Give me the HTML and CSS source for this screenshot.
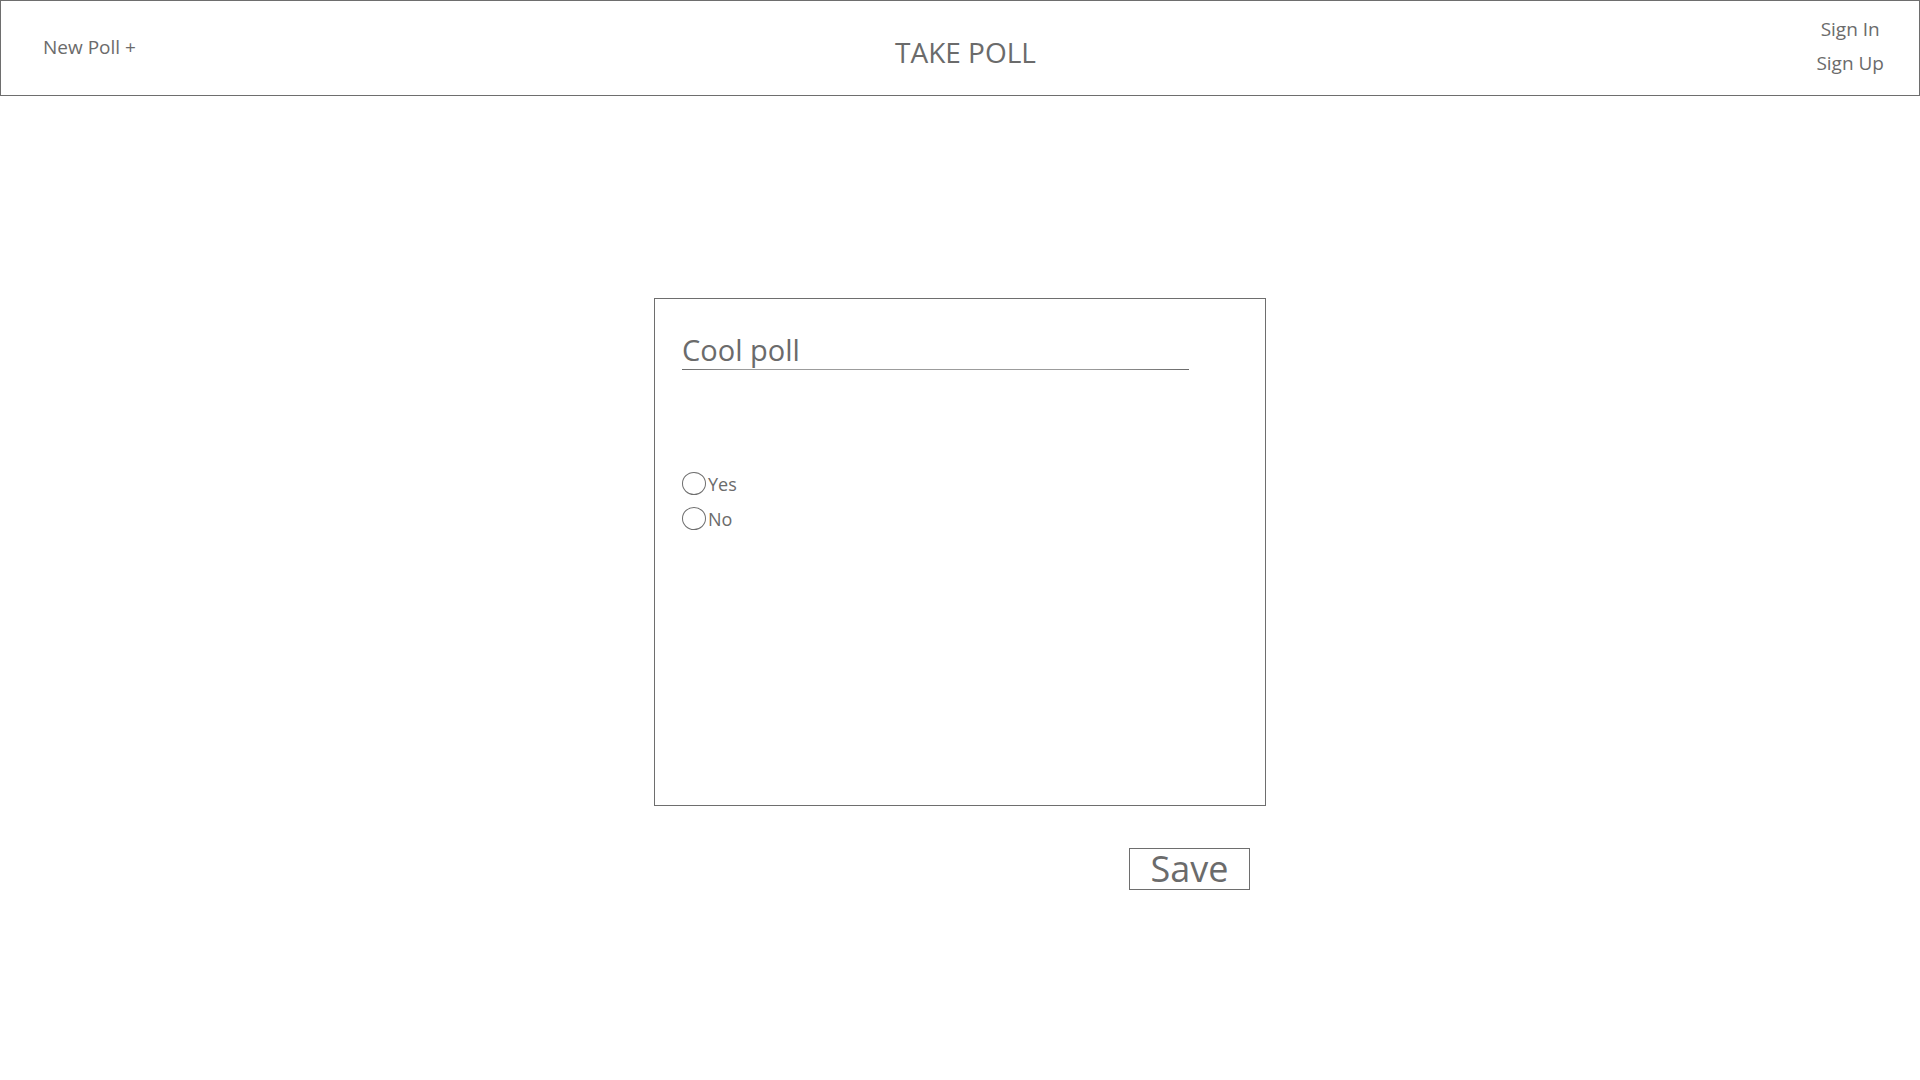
FILE: index.html
```html
<!DOCTYPE html>
<html lang="en">
<head>
<meta charset="utf-8">
<title>Take Poll</title>
<link rel="stylesheet" href="styles.css">
</head>
<body>
<header class="topbar">
  <a class="new-poll" href="#">New Poll +</a>
  <h1 class="title">TAKE POLL</h1>
  <nav class="auth">
    <a href="#">Sign In</a>
    <a href="#">Sign Up</a>
  </nav>
</header>
<main class="page">
  <div class="poll-wrap">
    <section class="poll-card">
      <div class="poll-title">Cool poll</div>
      <div class="options">
        <label class="option"><span class="radio"></span><span class="opt-text">Yes</span></label>
        <label class="option"><span class="radio"></span><span class="opt-text">No</span></label>
      </div>
    </section>
    <div class="actions">
      <button class="save">Save</button>
    </div>
  </div>
</main>
</body>
</html>
```
FILE: styles.css
```css
* { box-sizing: border-box; }
html, body { margin: 0; padding: 0; background: #fff; }
body {
  font-family: "Open Sans", "Noto Sans", sans-serif;
  color: #6b6b6b;
}
a { color: inherit; text-decoration: none; }

.topbar {
  height: 96px;
  border: 1px solid #6e6e6e;
  display: grid;
  grid-template-columns: 1fr auto 1fr;
  align-items: center;
  padding: 0 35px 0 42px;
}
.new-poll {
  font-size: 19px;
  justify-self: start;
  margin-top: -2px;
}
.title {
  margin: 8px 0 0 4px;
  font-size: 28px;
  font-weight: 400;
}
.auth {
  justify-self: end;
  display: flex;
  flex-direction: column;
  align-items: center;
  font-size: 19px;
  line-height: 34px;
  margin-top: -4px;
}

.page {
  display: flex;
  justify-content: center;
  padding-top: 202px;
}
.poll-wrap { width: 612px; }
.poll-card {
  height: 508px;
  border: 1px solid #6e6e6e;
  padding: 31px 0 0 27px;
}
.poll-title {
  width: 507px;
  font-size: 29px;
  line-height: 39px;
  border-bottom: 1px solid #7a7a7a;
  border-image: linear-gradient(to right, #6a6a6a, #9c9c9c 12%, #9c9c9c 80%, #6a6a6a) 1;
}
.options {
  margin-top: 102px;
  display: flex;
  flex-direction: column;
  gap: 12px;
}
.option {
  display: flex;
  align-items: center;
  height: 23px;
  font-size: 18px;
}
.radio {
  width: 24px;
  height: 23px;
  border: 1px solid #6e6e6e;
  border-radius: 50%;
}
.opt-text { margin-left: 2px; }

.actions {
  display: flex;
  justify-content: flex-end;
  padding: 42px 16px 0 0;
}
.save {
  width: 121px;
  height: 42px;
  border: 1px solid #6e6e6e;
  background: #fff;
  color: #6b6b6b;
  font-family: "Open Sans", "Noto Sans", sans-serif;
  font-size: 36px;
  line-height: 38px;
  padding: 0;
}
```
